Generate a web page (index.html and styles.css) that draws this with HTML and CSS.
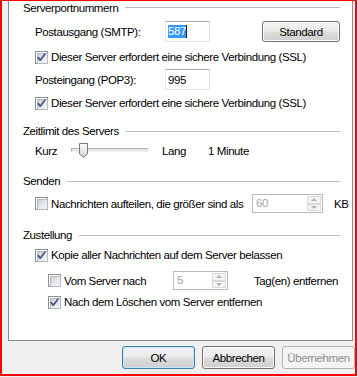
FILE: index.html
```html
<!DOCTYPE html>
<html>
<head>
<meta charset="utf-8">
<link rel="stylesheet" href="styles.css">
</head>
<body>
<div class="frame">
  <div class="page">
    <div class="ghead h1"><span>Serverportnummern</span><i class="gline"></i></div>
    <div class="row r-smtp">
      <span class="flabel">Postausgang (SMTP):</span>
      <span class="tbox"><span class="sel">587</span><span class="caret"></span></span>
      <button class="btn btn-std">Standard</button>
    </div>
    <div class="row r-ssl1">
      <span class="cb on"><svg class="tick" width="13" height="13" viewBox="0 0 13 13"><path d="M3.2 6.6 L5.3 9.2 L9.8 3.2" fill="none" stroke="#3f5487" stroke-width="1.7" stroke-linecap="round" stroke-linejoin="round"/></svg></span>
      <span class="clabel">Dieser Server erfordert eine sichere Verbindung (SSL)</span>
    </div>
    <div class="row r-pop3">
      <span class="flabel">Posteingang (POP3):</span>
      <span class="tbox">995</span>
    </div>
    <div class="row r-ssl2">
      <span class="cb on"><svg class="tick" width="13" height="13" viewBox="0 0 13 13"><path d="M3.2 6.6 L5.3 9.2 L9.8 3.2" fill="none" stroke="#3f5487" stroke-width="1.7" stroke-linecap="round" stroke-linejoin="round"/></svg></span>
      <span class="clabel">Dieser Server erfordert eine sichere Verbindung (SSL)</span>
    </div>

    <div class="ghead h2"><span>Zeitlimit des Servers</span><i class="gline"></i></div>
    <div class="row r-slider">
      <span class="s-kurz">Kurz</span>
      <span class="slider">
        <span class="track"></span>
        <svg class="thumb" width="9" height="15" viewBox="0 0 9 15">
          <defs><linearGradient id="tg" x1="0" y1="0" x2="0" y2="1"><stop offset="0" stop-color="#fbfbfb"/><stop offset="1" stop-color="#d6d6d6"/></linearGradient></defs>
          <path d="M0.5 0.5 H8.5 V11 L4.5 14.2 L0.5 11 Z" fill="url(#tg)" stroke="#7a7a7a"/>
        </svg>
      </span>
      <span class="s-lang">Lang</span>
      <span>1 Minute</span>
    </div>

    <div class="ghead h3"><span>Senden</span><i class="gline"></i></div>
    <div class="row r-split">
      <span class="cb"></span>
      <span class="clabel split-text">Nachrichten aufteilen, die größer sind als</span>
      <span class="spin spin-60">
        <span class="spin-val">60</span>
        <span class="spin-btns"><span class="sb"><i class="up"></i></span><span class="sb"><i class="down"></i></span></span>
      </span>
      <span class="kb">KB</span>
    </div>

    <div class="ghead h4"><span>Zustellung</span><i class="gline"></i></div>
    <div class="row r-copy">
      <span class="cb on"><svg class="tick" width="13" height="13" viewBox="0 0 13 13"><path d="M3.2 6.6 L5.3 9.2 L9.8 3.2" fill="none" stroke="#3f5487" stroke-width="1.7" stroke-linecap="round" stroke-linejoin="round"/></svg></span>
      <span class="clabel">Kopie aller Nachrichten auf dem Server belassen</span>
    </div>
    <div class="row sub r-days">
      <span class="cb"></span>
      <span class="clabel days-text">Vom Server nach</span>
      <span class="spin spin-5">
        <span class="spin-val">5</span>
        <span class="spin-btns"><span class="sb"><i class="up"></i></span><span class="sb"><i class="down"></i></span></span>
      </span>
      <span class="tage">Tag(en) entfernen</span>
    </div>
    <div class="row sub r-del">
      <span class="cb on"><svg class="tick" width="13" height="13" viewBox="0 0 13 13"><path d="M3.2 6.6 L5.3 9.2 L9.8 3.2" fill="none" stroke="#3f5487" stroke-width="1.7" stroke-linecap="round" stroke-linejoin="round"/></svg></span>
      <span class="clabel">Nach dem Löschen vom Server entfernen</span>
    </div>
  </div>
  <div class="buttons">
    <button class="btn btn-def">OK</button>
    <button class="btn">Abbrechen</button>
    <button class="btn btn-dis">Übernehmen</button>
  </div>
</div>
</body>
</html>
```

FILE: styles.css
```css
* { box-sizing: border-box; }
html, body { margin: 0; padding: 0; }
body {
  background: #f0f0f0;
  font-family: "Liberation Sans", Arial, sans-serif;
  font-size: 11.5px;
  letter-spacing: -0.4px;
  color: #000;
  width: 358px;
  height: 377px;
  overflow: hidden;
}
.frame {
  width: 357px;
  height: 376px;
  border: 2px solid #ff0000;
  border-top-width: 1px;
  background: #f0f0f0;
  display: flex;
  flex-direction: column;
}
.page {
  flex: none;
  margin-left: 6px;
  width: 345px;
  height: 340px;
  background: #fff;
  border: 1px solid #898c95;
  border-top: 0;
  padding: 0 12px 0 14px;
  display: flex;
  flex-direction: column;
}
.ghead {
  display: flex;
  align-items: center;
  height: 14px;
  line-height: 14px;
  white-space: nowrap;
}
.gline {
  flex: 1;
  height: 1px;
  background: #bdbdbd;
  margin-left: 7px;
}
.h1 { height: 13px; }
.h2 { margin-top: 13px; }
.h3 { margin-top: 15px; }
.h4 { margin-top: 15px; }

.row {
  display: flex;
  align-items: center;
  margin-left: 12px;
  white-space: nowrap;
}
.row.sub { margin-left: 25px; }
.r-smtp { height: 21px; margin-top: 7px; }
.r-ssl1 { height: 16px; margin-top: 7px; }
.r-pop3 { height: 21px; margin-top: 4px; }
.r-ssl2 { height: 16px; margin-top: 5px; }
.r-slider { height: 16px; margin-top: 5px; }
.r-split { height: 19px; margin-top: 6px; }
.r-copy { height: 16px; margin-top: 5px; }
.r-days { height: 19px; margin-top: 8px; }
.r-del { height: 16px; margin-top: 4px; }

.flabel { width: 130px; flex: none; }
.tbox {
  flex: none;
  width: 45px;
  height: 21px;
  border: 1px solid;
  border-color: #abadb3 #dbdfe6 #e3e9ef #e2e3ea;
  background: #fff;
  display: flex;
  align-items: center;
  padding-left: 2px;
}
.sel {
  background: #3399ff;
  color: #fff;
  line-height: 13px;
}
.caret {
  width: 1px;
  height: 13px;
  background: #1a1a1a;
}

.btn {
  font-family: inherit;
  font-size: 11.5px;
  letter-spacing: -0.4px;
  color: #000;
  margin: 0;
  padding: 0;
  border: 1px solid #707070;
  border-radius: 3px;
  background: linear-gradient(#f2f2f2 0%, #ebebeb 48%, #dddddd 52%, #cfcfcf 100%);
  box-shadow: inset 0 0 0 1px #fbfbfb;
  display: flex;
  align-items: center;
  justify-content: center;
}
.btn-std { margin-left: 52px; width: 80px; height: 21px; }

.cb {
  flex: none;
  position: relative;
  width: 13px;
  height: 13px;
  border: 1px solid #8e8f8f;
  background: #fff;
}
.cb::before {
  content: "";
  position: absolute;
  left: 1px;
  top: 1px;
  width: 9px;
  height: 9px;
  border: 1px solid #b5b9c0;
  background: linear-gradient(135deg, #cbcfd5 0%, #e6e8eb 55%, #f7f7f7 100%);
}
.cb .tick {
  position: absolute;
  left: -1px;
  top: -1px;
}
.clabel { margin-left: 3px; }

.s-kurz { width: 36px; flex: none; }
.slider {
  flex: none;
  position: relative;
  width: 77px;
  height: 16px;
  display: flex;
  align-items: center;
}
.track {
  width: 100%;
  height: 4px;
  margin-top: -2px;
  border: 1px solid;
  border-color: #b0b0b0 #d8d8d8 #f4f4f4 #b0b0b0;
  background: #e7e7e7;
}
.thumb {
  position: absolute;
  left: 8px;
  top: 0;
}
.s-lang { margin-left: 14px; width: 46px; flex: none; }

.split-text { width: 201px; flex: none; }
.days-text { width: 109px; flex: none; }
.spin {
  flex: none;
  display: flex;
  height: 19px;
  border: 1px solid #b9b9b9;
  background: #fff;
}
.spin-60 { width: 71px; }
.spin-5 { width: 55px; }
.spin-val {
  flex: 1;
  padding-left: 3px;
  color: #a3a3a3;
  line-height: 17px;
}
.spin-btns {
  width: 15px;
  display: flex;
  flex-direction: column;
  padding: 1px 1px 1px 0;
}
.sb {
  flex: 1;
  border: 1px solid #dadada;
  background: #f4f4f4;
  display: flex;
  align-items: center;
  justify-content: center;
}
.sb i { width: 0; height: 0; border-left: 3px solid transparent; border-right: 3px solid transparent; }
.sb .up { border-bottom: 3px solid #b2b2b2; }
.sb .down { border-top: 3px solid #b2b2b2; }
.kb { margin-left: 11px; }
.tage { margin-left: 26px; }

.buttons {
  display: flex;
  gap: 7px;
  padding-left: 120px;
  margin-top: 5px;
}
.buttons .btn { width: 73px; height: 23px; }
.btn-def {
  border-color: #3c7fb1;
  box-shadow: inset 0 0 0 1px #c5e7f8;
}
.btn-dis {
  color: #8d8d8d;
  border-color: #adb2b5;
  background: #f4f4f4;
  box-shadow: none;
}
```
